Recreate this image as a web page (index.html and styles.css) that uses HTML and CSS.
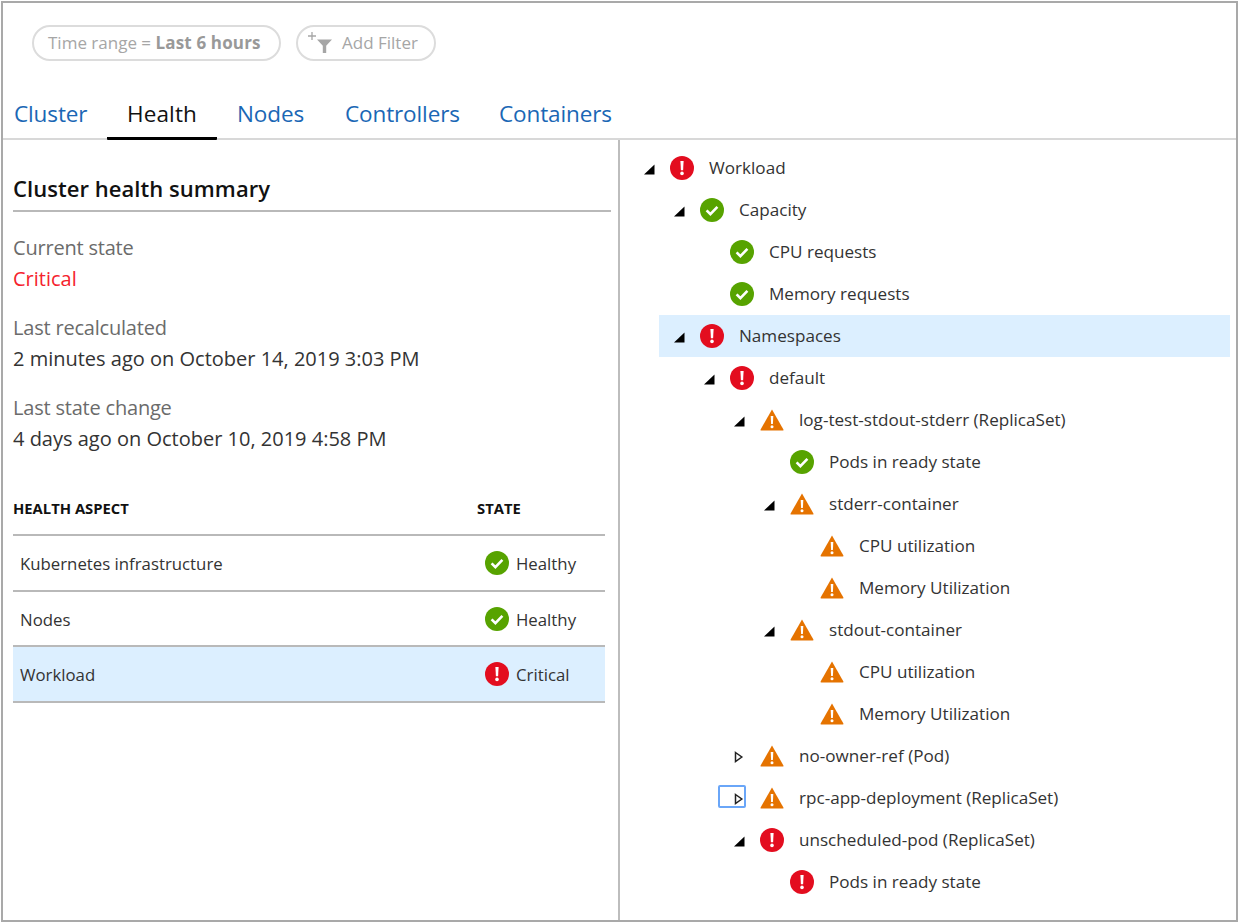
FILE: index.html
```html
<!DOCTYPE html>
<html lang="en">
<head>
<meta charset="utf-8">
<title>Cluster health</title>
<link rel="stylesheet" href="styles.css">
</head>
<body>
<svg class="defs" width="0" height="0" aria-hidden="true">
  <symbol id="i-ok" viewBox="0 0 24 24">
    <circle cx="12" cy="12" r="12" fill="#57a300"/>
    <path d="M6.6 12.4l3.8 3.8 7-7.400" fill="none" stroke="#fff" stroke-width="2.6"/>
  </symbol>
  <symbol id="i-crit" viewBox="0 0 24 24">
    <circle cx="12" cy="12" r="12" fill="#e30d1f"/>
    <path d="M10.4 5h3.2l-.5 9.2h-2.2z" fill="#fff"/>
    <circle cx="12" cy="17.4" r="1.8" fill="#fff"/>
  </symbol>
  <symbol id="i-warn" viewBox="0 0 24 24">
    <path d="M12 1.5L23.4 21.4a.8.8 0 0 1-.7 1.1H1.3a.8.8 0 0 1-.7-1.1z" fill="#e57300"/>
    <path d="M10.7 8h2.6l-.4 8h-1.800z" fill="#fff"/>
    <circle cx="12" cy="18.7" r="1.5" fill="#fff"/>
  </symbol>
  <symbol id="i-open" viewBox="0 0 12 12">
    <path d="M11.500 1.500v10H1z" fill="#000"/>
  </symbol>
  <symbol id="i-closed" viewBox="0 0 12 12">
    <path d="M2.500 1.500L8.800 6 2.500 10.500z" fill="#fff" stroke="#222" stroke-width="1.5"/>
  </symbol>
</svg>
<div class="frame">
  <div class="toolbar">
    <div class="pill pill-time">Time range = <b>Last 6 hours</b></div>
    <div class="pill pill-add">
      <svg class="add-icon" width="24" height="24" viewBox="0 0 24 24">
        <path d="M0 5h8M4 1v8" stroke="#a6a6a6" stroke-width="1.3" fill="none"/>
        <path d="M9 8.500h15l-5.800 6.200V22h-3.400v-7.300z" fill="#a6a6a6"/>
      </svg>
      <span>Add Filter</span>
    </div>
  </div>
  <nav class="tabs">
    <a class="tab tab-cluster">Cluster</a>
    <a class="tab tab-health active">Health</a>
    <a class="tab tab-nodes">Nodes</a>
    <a class="tab tab-controllers">Controllers</a>
    <a class="tab tab-containers">Containers</a>
  </nav>
  <main class="main">
    <section class="left">
      <h2 class="title">Cluster health summary</h2>
      <div class="field">
        <div class="label">Current state</div>
        <div class="value critical">Critical</div>
      </div>
      <div class="field">
        <div class="label">Last recalculated</div>
        <div class="value">2 minutes ago on October 14, 2019 3:03 PM</div>
      </div>
      <div class="field">
        <div class="label">Last state change</div>
        <div class="value">4 days ago on October 10, 2019 4:58 PM</div>
      </div>
      <div class="grid">
        <div class="grid-head"><span class="col-a">HEALTH ASPECT</span><span class="col-b">STATE</span></div>
        <div class="grid-row"><span class="col-a">Kubernetes infrastructure</span><span class="col-b"><svg class="ic"><use href="#i-ok"/></svg>Healthy</span></div>
        <div class="grid-row"><span class="col-a">Nodes</span><span class="col-b"><svg class="ic"><use href="#i-ok"/></svg>Healthy</span></div>
        <div class="grid-row selected"><span class="col-a">Workload</span><span class="col-b"><svg class="ic"><use href="#i-crit"/></svg>Critical</span></div>
      </div>
    </section>
    <section class="tree">
      <div class="node l0"><span class="tg"><svg class="tw"><use href="#i-open"/></svg></span><svg class="ic"><use href="#i-crit"/></svg><span class="nm">Workload</span></div>
      <div class="node l1"><span class="tg"><svg class="tw"><use href="#i-open"/></svg></span><svg class="ic"><use href="#i-ok"/></svg><span class="nm">Capacity</span></div>
      <div class="node l2"><span class="tg"></span><svg class="ic"><use href="#i-ok"/></svg><span class="nm">CPU requests</span></div>
      <div class="node l2"><span class="tg"></span><svg class="ic"><use href="#i-ok"/></svg><span class="nm">Memory requests</span></div>
      <div class="node l1 selected"><span class="tg"><svg class="tw"><use href="#i-open"/></svg></span><svg class="ic"><use href="#i-crit"/></svg><span class="nm">Namespaces</span></div>
      <div class="node l2"><span class="tg"><svg class="tw"><use href="#i-open"/></svg></span><svg class="ic"><use href="#i-crit"/></svg><span class="nm">default</span></div>
      <div class="node l3"><span class="tg"><svg class="tw"><use href="#i-open"/></svg></span><svg class="ic"><use href="#i-warn"/></svg><span class="nm">log-test-stdout-stderr (ReplicaSet)</span></div>
      <div class="node l4"><span class="tg"></span><svg class="ic"><use href="#i-ok"/></svg><span class="nm">Pods in ready state</span></div>
      <div class="node l4"><span class="tg"><svg class="tw"><use href="#i-open"/></svg></span><svg class="ic"><use href="#i-warn"/></svg><span class="nm">stderr-container</span></div>
      <div class="node l5"><span class="tg"></span><svg class="ic"><use href="#i-warn"/></svg><span class="nm">CPU utilization</span></div>
      <div class="node l5"><span class="tg"></span><svg class="ic"><use href="#i-warn"/></svg><span class="nm">Memory Utilization</span></div>
      <div class="node l4"><span class="tg"><svg class="tw"><use href="#i-open"/></svg></span><svg class="ic"><use href="#i-warn"/></svg><span class="nm">stdout-container</span></div>
      <div class="node l5"><span class="tg"></span><svg class="ic"><use href="#i-warn"/></svg><span class="nm">CPU utilization</span></div>
      <div class="node l5"><span class="tg"></span><svg class="ic"><use href="#i-warn"/></svg><span class="nm">Memory Utilization</span></div>
      <div class="node l3"><span class="tg"><svg class="tw"><use href="#i-closed"/></svg></span><svg class="ic"><use href="#i-warn"/></svg><span class="nm">no-owner-ref (Pod)</span></div>
      <div class="node l3"><span class="tg focus"><svg class="tw"><use href="#i-closed"/></svg></span><svg class="ic"><use href="#i-warn"/></svg><span class="nm">rpc-app-deployment (ReplicaSet)</span></div>
      <div class="node l3"><span class="tg"><svg class="tw"><use href="#i-open"/></svg></span><svg class="ic"><use href="#i-crit"/></svg><span class="nm">unscheduled-pod (ReplicaSet)</span></div>
      <div class="node l4"><span class="tg"></span><svg class="ic"><use href="#i-crit"/></svg><span class="nm">Pods in ready state</span></div>
    </section>
  </main>
</div>
</body>
</html>
```
FILE: styles.css
```css
* { box-sizing: border-box; }
html, body { margin: 0; padding: 0; background: #fff; }
body {
  width: 1239px;
  height: 922px;
  overflow: hidden;
  padding: 1px 1px 0 1px;
  font-family: "Open Sans", "Noto Sans", "Liberation Sans", sans-serif;
  color: #333;
}
.defs { position: absolute; }
.frame {
  width: 1237px;
  height: 921px;
  border: 2px solid #a9a9a9;
  display: flex;
  flex-direction: column;
}

.toolbar {
  display: flex;
  gap: 15px;
  padding: 22px 0 0 29px;
  height: 67px;
}
.pill {
  height: 36px;
  border: 2px solid #dcdcdc;
  border-radius: 18px;
  display: flex;
  align-items: center;
  color: #a6a6a6;
  font-size: 17px;
  white-space: pre;
  padding-bottom: 2px;
}
.pill b { font-weight: 700; color: #999; letter-spacing: 0.15px; }
.pill-time { width: 249px; padding-left: 14px; }
.pill-add { width: 140px; padding-left: 10px; }
.add-icon { flex: none; margin: 2px 10px 0 0; }

.tabs {
  height: 70px;
  display: flex;
  border-bottom: 2px solid #d8d8d8;
  font-size: 22.500px;
  letter-spacing: -0.12px;
  line-height: 30px;
}
.tab { color: #1a67b5; padding-top: 29px; display: block; }
.tab-cluster { margin-left: 11px; width: 93px; }
.tab-health {
  width: 110px;
  text-align: center;
  color: #111;
  font-weight: 500;
  letter-spacing: 0.1px;
  height: 70px;
  border-bottom: 3px solid #000;
  border-radius: 0 0 1px 1px;
}
.tab-nodes { margin-left: 20px; width: 108px; }
.tab-controllers { width: 154px; }

.main { flex: 1; display: flex; min-height: 0; }

.left {
  width: 617px;
  border-right: 2px solid #bdbdbd;
  padding: 33px 7px 0 10px;
}
.title {
  margin: 0 0 20px;
  padding-bottom: 6px;
  height: 39px;
  border-bottom: 2px solid #b9b9b9;
  font-size: 22px;
  line-height: 31px;
  font-weight: 600;
  color: #111;
  letter-spacing: 0.05px;
}
.field { height: 80px; font-size: 20px; line-height: 31px; }
.label { color: #6b6b6b; letter-spacing: -0.2px; }
.value { color: #333; }
.critical { color: #f5222d; font-weight: 500; }

.grid { width: 592px; font-size: 16.800px; margin-top: 8px; }
.grid-head {
  height: 56px;
  padding-top: 16px;
  border-bottom: 2px solid #b9b9b9;
  display: flex;
  align-items: flex-start;
  font-size: 14.800px;
  line-height: 24px;
  font-weight: 700;
  color: #111;
}
.grid-head .col-a { width: 464px; }
.grid-row {
  height: 55.5px;
  border-bottom: 2px solid #b9b9b9;
  display: flex;
  align-items: center;
  padding: 1px 0 0 7px;
}
.grid-row:nth-child(3) { padding-top: 2px; }
.grid-row .col-a { width: 465px; }
.grid-row .col-b { display: flex; align-items: center; gap: 7px; }
.grid-row.selected { background: #dcefff; }

.ic { width: 24px; height: 24px; flex: none; display: block; }

.tree { flex: 1; padding-top: 7px; font-size: 17.100px; }
.node { height: 42px; display: flex; align-items: center; margin-right: 6px; }
.node.selected { background: #dcefff; }
.l0 { margin-left: 9px; }
.l1 { margin-left: 39px; }
.l2 { margin-left: 69px; }
.l3 { margin-left: 99px; }
.l4 { margin-left: 129px; }
.l5 { margin-left: 159px; }
.tg {
  width: 40px;
  margin-right: 1px;
  flex: none;
  display: flex;
  align-items: center;
  justify-content: center;
  position: relative;
}
.tw { width: 12px; height: 12px; display: block; margin-top: 2px; }
.nm { margin: -2px 0 0 15px; white-space: nowrap; }
.focus::before {
  content: "";
  position: absolute;
  left: -1px;
  top: -6px;
  width: 24px;
  height: 19px;
  border: 2px solid #6aa6f8;
  border-radius: 2px;
}
```
